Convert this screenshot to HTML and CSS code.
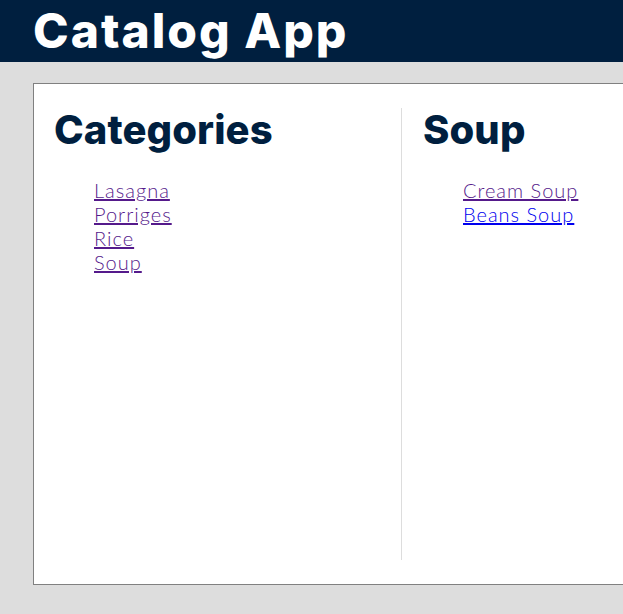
FILE: index.html
```html
<!DOCTYPE html>
<html>
<head>
<meta charset="utf-8">
<link rel="stylesheet" href="styles.css">
</head>
<body>
<header class="topbar">
  <h1 class="brand">Catalog App</h1>
</header>
<main class="panel">
  <section class="column">
    <h2 class="col-title">Categories</h2>
    <ul class="links">
      <li><a class="visited" href="#">Lasagna</a></li>
      <li><a class="visited" href="#">Porriges</a></li>
      <li><a class="visited" href="#">Rice</a></li>
      <li><a class="visited" href="#">Soup</a></li>
    </ul>
  </section>
  <section class="column divided">
    <h2 class="col-title">Soup</h2>
    <ul class="links">
      <li><a class="visited" href="#">Cream Soup</a></li>
      <li><a class="fresh" href="#">Beans Soup</a></li>
    </ul>
  </section>
</main>
</body>
</html>
```
FILE: styles.css
```css
html, body {
  margin: 0;
  padding: 0;
}
body {
  background: #dddddd;
  width: 623px;
  height: 614px;
  overflow: hidden;
}
.topbar {
  background: #001f3f;
  height: 62px;
  padding-left: 33px;
  display: flex;
  align-items: center;
}
.brand {
  margin: 0;
  color: #ffffff;
  font-family: Inter, "Open Sans", sans-serif;
  font-weight: 800;
  font-size: 48px;
  line-height: 62px;
  letter-spacing: 2px;
}
.panel {
  margin: 21px 0 0 33px;
  width: 780px;
  height: 502px;
  box-sizing: border-box;
  background: #ffffff;
  border: 1px solid #808080;
  padding: 24px 0;
  display: flex;
}
.column {
  width: 367px;
  box-sizing: border-box;
  padding: 0 20px;
}
.divided {
  border-left: 1px solid #dddddd;
  padding-left: 21px;
}
.col-title {
  margin: 0;
  color: #001f3f;
  font-family: Inter, "Open Sans", sans-serif;
  font-weight: 800;
  font-size: 40px;
  line-height: 44px;
  letter-spacing: 0.1px;
}
.links {
  list-style: none;
  margin: 26px 0 0;
  padding-left: 40px;
  font-family: Lato, "Open Sans", sans-serif;
  font-weight: 300;
  font-size: 20px;
  line-height: 24px;
  letter-spacing: 1px;
}
.links a.visited { color: #551a8b; }
.links a.fresh { color: #0000ee; }
```
